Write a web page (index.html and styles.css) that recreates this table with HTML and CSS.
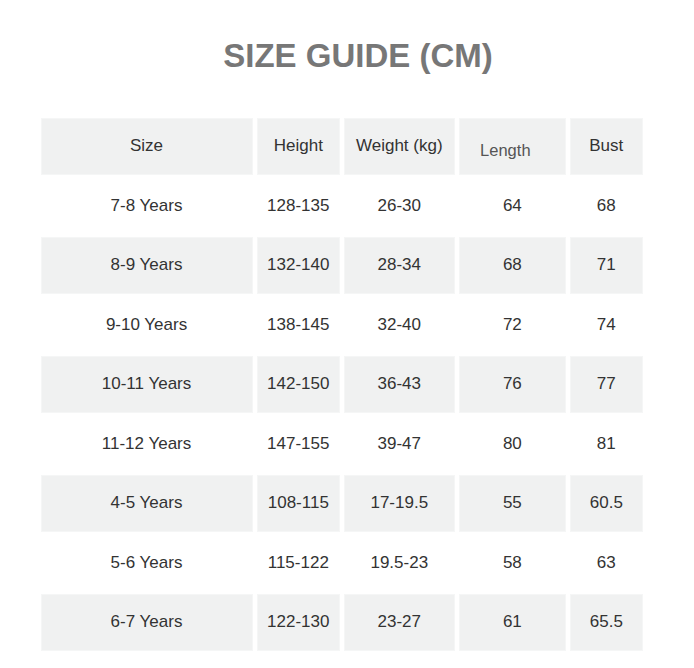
FILE: index.html
```html
<!DOCTYPE html>
<html>
<head>
<meta charset="utf-8">
<link rel="stylesheet" href="styles.css">
</head>
<body>
<h1 class="title">SIZE GUIDE (CM)</h1>
<table class="guide">
  <colgroup>
    <col class="c-size"><col class="c-height"><col class="c-weight"><col class="c-length"><col class="c-bust">
  </colgroup>
  <tr class="shade"><td>Size</td><td>Height</td><td>Weight (kg)</td><td class="len-head">Length</td><td>Bust</td></tr>
  <tr><td>7-8 Years</td><td>128-135</td><td>26-30</td><td>64</td><td>68</td></tr>
  <tr class="shade"><td>8-9 Years</td><td>132-140</td><td>28-34</td><td>68</td><td>71</td></tr>
  <tr><td>9-10 Years</td><td>138-145</td><td>32-40</td><td>72</td><td>74</td></tr>
  <tr class="shade"><td>10-11 Years</td><td>142-150</td><td>36-43</td><td>76</td><td>77</td></tr>
  <tr><td>11-12 Years</td><td>147-155</td><td>39-47</td><td>80</td><td>81</td></tr>
  <tr class="shade"><td>4-5 Years</td><td>108-115</td><td>17-19.5</td><td>55</td><td>60.5</td></tr>
  <tr><td>5-6 Years</td><td>115-122</td><td>19.5-23</td><td>58</td><td>63</td></tr>
  <tr class="shade"><td>6-7 Years</td><td>122-130</td><td>23-27</td><td>61</td><td>65.5</td></tr>
</table>
</body>
</html>
```

FILE: styles.css
```css
html, body {
  margin: 0;
  padding: 0;
  background: #ffffff;
}

body {
  font-family: "Liberation Sans", Arial, sans-serif;
  width: 694px;
  height: 668px;
  overflow: hidden;
}

.title {
  margin: 0;
  padding: 37px 0 0 22px;
  height: 38px;
  line-height: 38px;
  font-size: 33px;
  font-weight: bold;
  color: #777777;
  text-align: center;
}

.guide {
  margin: 40px 0 0 36.5px;
  border-collapse: separate;
  border-spacing: 4.5px 3px;
  table-layout: fixed;
  width: 610px;
}

.c-size { width: 211px; }
.c-height { width: 83px; }
.c-weight { width: 110px; }
.c-length { width: 107px; }
.c-bust { width: 72px; }

.guide td {
  height: 56.5px;
  padding: 0;
  text-align: center;
  vertical-align: middle;
  font-size: 17px;
  color: #333333;
  box-sizing: border-box;
}

.shade td {
  background: #f0f1f1;
  box-shadow: inset 0 0 0 1px #f5f6f6;
}

.guide td.len-head {
  padding: 8px 14px 0 0;
  color: #555555;
  font-size: 16.5px;
}
```
